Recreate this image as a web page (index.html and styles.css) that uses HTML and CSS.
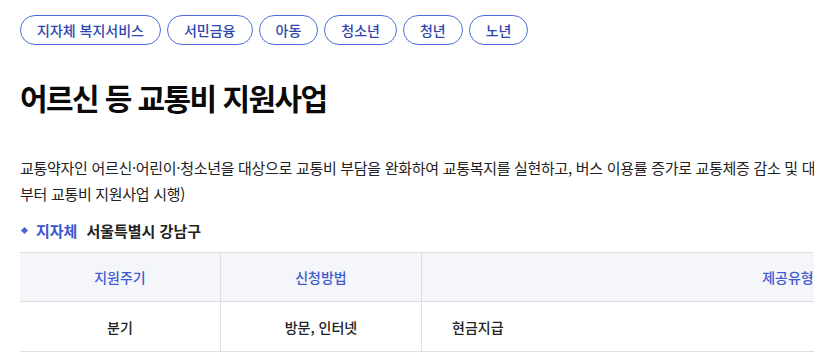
FILE: index.html
```html
<!DOCTYPE html>
<html lang="ko">
<head>
<meta charset="utf-8">
<link rel="stylesheet" href="styles.css">
</head>
<body>
<div class="page">
  <ul class="tags">
    <li class="tag">지자체 복지서비스</li>
    <li class="tag">서민금융</li>
    <li class="tag">아동</li>
    <li class="tag">청소년</li>
    <li class="tag">청년</li>
    <li class="tag">노년</li>
  </ul>
  <h1 class="title">어르신 등 교통비 지원사업</h1>
  <p class="desc">교통약자인 어르신·어린이·청소년을 대상으로 교통비 부담을 완화하여 교통복지를 실현하고, 버스 이용률 증가로 교통체증 감소 및 대기오염 개선 효과 기대 (2024년 1분기부터 교통비 지원사업 시행)</p>
  <div class="meta"><span class="bullet"></span><span class="meta-label">지자체</span><span class="meta-value">서울특별시 강남구</span></div>
  <table class="info">
    <thead>
      <tr><th class="c1">지원주기</th><th class="c2">신청방법</th><th class="c3">제공유형</th></tr>
    </thead>
    <tbody>
      <tr><td class="c1">분기</td><td class="c2">방문, 인터넷</td><td class="c3 left">현금지급</td></tr>
    </tbody>
  </table>
</div>
</body>
</html>
```
FILE: styles.css
```css
html, body { margin: 0; padding: 0; background: #fff; overflow: hidden; }
body { font-family: "Noto Sans CJK KR", "Noto Sans", sans-serif; color: #111; width: 814px; height: 362px; }
.page { padding: 15px 0 0 20px; width: 1200px; }
.tags { list-style: none; margin: 0; padding: 0; display: flex; gap: 6px; }
.tag { height: 28px; line-height: 28px; padding: 0 16px; border: 1px solid #4a6bde; border-radius: 16px; color: #2e46ad; font-size: 14px; font-weight: 500; }
.title { margin: 30px 0 0; font-size: 30px; font-weight: 700; line-height: 44px; letter-spacing: -1.6px; color: #0a0a0a; }
.desc { margin: 36px 0 0; width: 1028px; font-size: 15px; line-height: 26px; color: #222; letter-spacing: -0.3px; }
.meta { margin-top: 12px; display: flex; align-items: center; height: 22px; font-size: 15px; }
.bullet { width: 5px; height: 5px; background: #4a63d8; transform: rotate(45deg); margin: 0 9px 0 2px; }
.meta-label { color: #3b56d0; font-weight: 700; margin-right: 9px; }
.meta-value { color: #222; font-weight: 700; }
.info { margin-top: 11px; border-collapse: collapse; font-size: 14px; table-layout: fixed; }
.info th, .info td { border: 1px solid #dedfe3; text-align: center; padding: 0; }
.info tr > :first-child { border-left: none; }
.info th { height: 48px; background: #f5f6fa; color: #3f5bd2; font-weight: 500; }
.info td { height: 49px; color: #222; font-weight: 500; }
.c1 { width: 200px; }
.c2 { width: 200px; }
.c3 { width: 702px; }
.info td.left { text-align: left; padding-left: 30px; }
```
